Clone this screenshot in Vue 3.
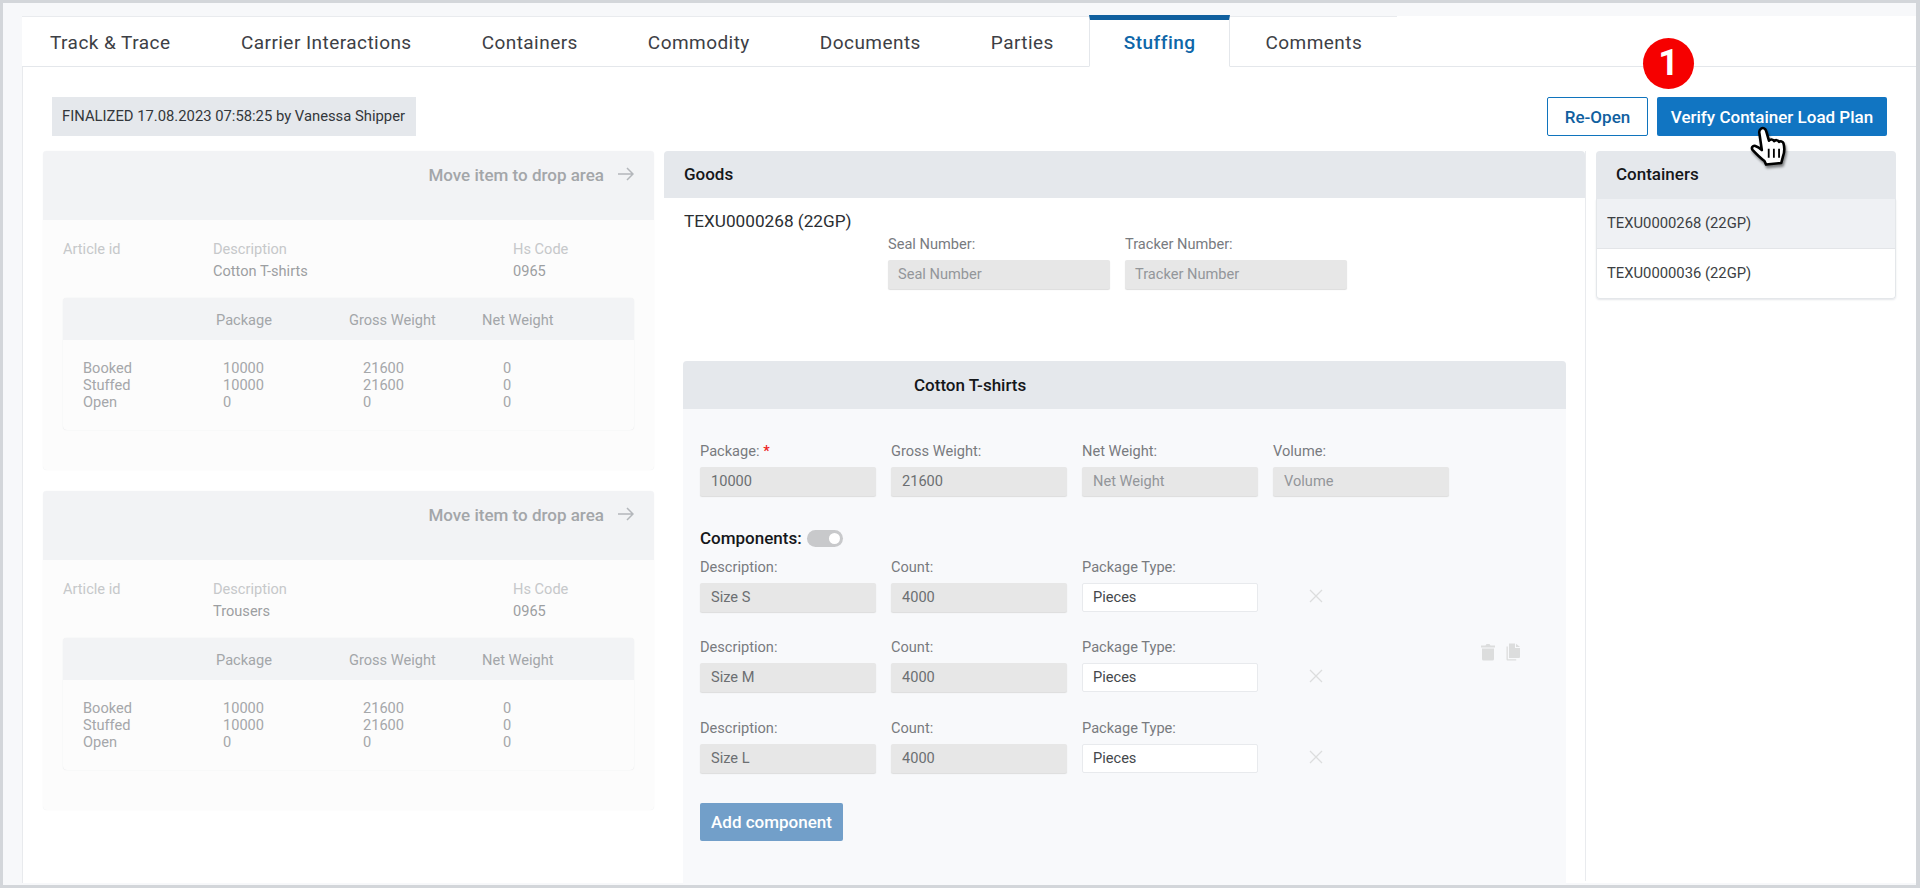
<script setup>
const tabs = ['Track & Trace', 'Carrier Interactions', 'Containers', 'Commodity', 'Documents', 'Parties', 'Stuffing', 'Comments']
const items = [{ name: 'Cotton T-shirts' }, { name: 'Trousers' }]
const rows = [
  ['Booked', '10000', '21600', '0'],
  ['Stuffed', '10000', '21600', '0'],
  ['Open', '0', '0', '0']
]
const sizes = ['Size S', 'Size M', 'Size L']
</script>

<template>
  <div class="frame">
    <div class="tabs">
      <div v-for="t in tabs" :key="t" class="tab" :class="{ active: t === 'Stuffing' }">{{ t }}</div>
      <div class="tabs-rest"></div>
    </div>
    <div class="content">
      <div class="toolbar">
        <div class="status">FINALIZED 17.08.2023 07:58:25 by Vanessa Shipper</div>
        <div class="actions">
          <button class="btn ghost">Re-Open</button>
          <button class="btn primary">Verify Container Load Plan</button>
        </div>
      </div>
      <div class="columns">
        <div class="left">
          <div v-for="item in items" :key="item.name" class="item">
            <div class="item-head">
              <span>Move item to drop area</span>
              <svg width="16" height="14" viewBox="0 0 16 14" fill="none" stroke="#b4b7bb" stroke-width="1.5"><path d="M0 7h15M9 1l6 6-6 6" /></svg>
            </div>
            <div class="item-body">
              <div class="meta">
                <div class="m-label">Article id</div>
                <div class="m-label">Description<div class="m-val">{{ item.name }}</div></div>
                <div class="m-label">Hs Code<div class="m-val">0965</div></div>
              </div>
              <div class="summary">
                <div class="sum-head">
                  <span>Package</span><span>Gross Weight</span><span>Net Weight</span>
                </div>
                <div class="sum-body">
                  <div v-for="r in rows" :key="r[0]" class="sum-row">
                    <span v-for="(c, i) in r" :key="i">{{ c }}</span>
                  </div>
                </div>
              </div>
            </div>
          </div>
        </div>

        <div class="goods">
          <div class="goods-head">Goods</div>
          <div class="goods-title">TEXU0000268 (22GP)</div>
          <div class="seal-row">
            <div class="field wide">
              <label>Seal Number:</label>
              <div class="input ph">Seal Number</div>
            </div>
            <div class="field wide">
              <label>Tracker Number:</label>
              <div class="input ph">Tracker Number</div>
            </div>
          </div>
          <div class="card">
            <div class="card-head">Cotton T-shirts</div>
            <div class="card-body">
              <div class="form">
                <div class="grid4">
                  <div class="field"><label>Package: <b class="req">*</b></label><div class="input">10000</div></div>
                  <div class="field"><label>Gross Weight:</label><div class="input">21600</div></div>
                  <div class="field"><label>Net Weight:</label><div class="input ph">Net Weight</div></div>
                  <div class="field"><label>Volume:</label><div class="input ph">Volume</div></div>
                </div>
                <div class="comp-title">
                  <span>Components:</span>
                  <span class="toggle"><i></i></span>
                </div>
                <div v-for="s in sizes" :key="s" class="grid4 comp">
                  <div class="field"><label>Description:</label><div class="input">{{ s }}</div></div>
                  <div class="field"><label>Count:</label><div class="input">4000</div></div>
                  <div class="field"><label>Package Type:</label><div class="input white">Pieces</div></div>
                  <div class="x">
                    <svg width="14" height="14" viewBox="0 0 14 14" stroke="#dcdddd" stroke-width="1.3" fill="none"><path d="M1 1l12 12M13 1L1 13" /></svg>
                  </div>
                </div>
                <button class="btn add">Add component</button>
              </div>
              <div class="tools">
                <svg width="14" height="18" viewBox="0 0 14 18" fill="#dcdddd"><path d="M0 2.5h4.5L5.5 1h3l1 1.5H14V4.500H0zM1 5.500h12V16a1.600 1.600 0 0 1-1.600 1.600H2.600A1.600 1.600 0 0 1 1 16z" /></svg>
                <svg width="15" height="18" viewBox="0 0 15 18" fill="#dcdddd"><path d="M3 0.500h6v4.600h5V14a1 1 0 0 1-1 1H3zM10 .7l4 3.400h-4zM1.800 3.500v12.800h8.400v1.200H1.600A1.100 1.100 0 0 1 .5 16.400V3.500z" /></svg>
              </div>
            </div>
          </div>
        </div>

        <div class="containers">
          <div class="cont-head">Containers</div>
          <div class="cont-list">
            <div class="cont-row sel">TEXU0000268 (22GP)</div>
            <div class="cont-row">TEXU0000036 (22GP)</div>
          </div>
        </div>
      </div>
    </div>

    <div class="step">1</div>
    <svg class="hand" width="44" height="47" viewBox="0 0 34 36">
      <path d="M10 3.500c1.600-1.200 3.500-.2 4 1.600l2.200 7.600c1-1.300 3.200-1.200 4 .4.900-1.200 3-1 3.800.6 1-.9 2.900-.5 3.400 1 .9 3.200.8 7.300-.5 10.700l-1.200 4.600-11.700 1.200-1.300-2.800C9.500 26 6 22.500 3.500 19.800c-1.200-1.500.3-3.700 2.200-3 1.800.7 3.700 2 5 3.200L8.800 7c-.3-1.300.2-2.700 1.200-3.500z" fill="#fff" stroke="#000" stroke-width="2" stroke-linejoin="round" class="hand-shape" />
      <path d="M16 19v7M20 19v7M24 19v7" stroke="#000" stroke-width="1.400" />
    </svg>
  </div>
</template>

<style>
html, body { margin: 0; background: #fff; }
</style>

<style scoped>
.frame {
  position: relative;
  width: 1920px;
  height: 888px;
  box-sizing: border-box;
  overflow: hidden;
  border: 3px solid #d3d6da;
  border-right-width: 4px;
  padding: 13px 0 0 19px;
  background: #f7f8fa;
  font-family: Roboto, "Liberation Sans", sans-serif;
  color: #3d4045;
}
.tabs { display: flex; height: 51px; box-sizing: border-box; background: #fff; border-bottom: 1px solid #e4e7eb; }
.tab {
  padding: 0 35px;
  font-size: 19px;
  letter-spacing: .45px;
  line-height: 51px;
  white-space: nowrap;
  border-top: 1px solid #e9ebee;
}
.tab:first-child { padding: 0 35.5px 0 28px; }
.tab.active {
  color: #0e66a8;
  font-weight: 500;
  margin-top: -1px;
  border-top: 5px solid #10609f;
  border-left: 1px solid #e4e7eb;
  border-right: 1px solid #e4e7eb;
  border-bottom: 1px solid #fff;
  height: 52px;
  line-height: 46px;
  box-sizing: border-box;
  padding: 0 34px;
}
.tabs-rest { flex: 1; margin-top: 1px; }
.content { height: 816px; background: #fff; border-left: 1px solid #e8eaed; padding: 0 0 0 20px; box-sizing: border-box; }
.toolbar { display: flex; justify-content: space-between; padding: 30px 29px 0 9px; height: 84px; box-sizing: border-box; }
.status { height: 39px; line-height: 39px; background: #e5e8ec; padding: 0 10px; font-size: 14.8px; color: #33373b; width: 364px; box-sizing: border-box; white-space: nowrap; }
.actions { display: flex; gap: 9px; }
.btn { font-family: inherit; font-size: 17px; font-weight: 500; height: 39px; border-radius: 2px; box-sizing: border-box; cursor: pointer; padding: 0; }
.ghost { width: 101px; background: #fff; border: 1px solid #1074bd; color: #10609f; }
.primary { width: 230px; background: #1175c2; border: 0; color: #fff; }
.columns { display: flex; align-items: stretch; height: 730px; }
.left { width: 611px; margin-right: 10px; display: flex; flex-direction: column; gap: 21px; }
.item { height: 319px; border-radius: 4px; background: #fcfcfc; box-shadow: 0 0 1px #e6e8ea; }
.item-head { height: 69px; background: #f2f3f5; border-radius: 4px 4px 0 0; display: flex; justify-content: flex-end; gap: 14px; padding: 15px 20px 0 0; box-sizing: border-box; color: #a3a6a9; font-size: 17px; font-weight: 500; line-height: 18px; }
.item-head svg { margin-top: 1px; }
.item-body { padding: 21px 20px 0; }
.meta { display: grid; grid-template-columns: 150px 300px 1fr; height: 57px; font-size: 14.6px; }
.m-label { color: #c6c8ca; line-height: 16px; }
.m-val { color: #9c9fa2; margin-top: 6px; }
.summary { height: 132px; border-radius: 4px; box-shadow: 0 0 1px #d8dadc; }
.sum-head { display: grid; grid-template-columns: 153px 133px 133px 1fr; height: 42px; background: #f2f3f5; border-radius: 4px 4px 0 0; line-height: 44px; font-size: 14.6px; color: #a3a6a9; }
.sum-head span:first-child { grid-column: 2; }
.sum-body { padding: 20px 0 0 20px; }
.sum-row { display: grid; grid-template-columns: 140px 140px 140px 1fr; font-size: 14.6px; line-height: 17px; color: #a5a7aa; }
.goods { width: 922px; border-right: 1px solid #e9ebee; margin-right: 10px; box-sizing: border-box; }
.goods-head { height: 47px; line-height: 47px; background: #e5e8ec; padding-left: 20px; font-size: 17px; font-weight: 500; color: #15171a; border-radius: 4px 4px 0 0; }
.goods-title { padding: 13px 0 0 20px; font-size: 17.2px; line-height: 20px; color: #2b2e32; }
.seal-row { display: flex; gap: 15px; padding: 5px 0 0 224px; height: 130px; box-sizing: border-box; }
.field { display: flex; flex-direction: column; }
.field label { font-size: 14.6px; line-height: 16px; color: #787b7f; margin-bottom: 8px; }
.wide { width: 222px; }
.input { height: 29px; line-height: 29px; background: #e7e7e7; border-radius: 2px; box-shadow: 0 1px 1px #dcdcdc; padding: 0 10px; font-size: 14.6px; color: #6c6f72; box-sizing: border-box; }
.input.ph { color: #93969a; }
.grid4 .input { padding-left: 11px; }
.grid4 .input.white { background: #fff; color: #44474b; border: 1px solid #e8eaed; padding-left: 10px; line-height: 27px; box-shadow: none; }
.req { color: #e22; font-weight: 500; }
.card { margin: 0 0 0 19px; width: 883px; border-radius: 4px 4px 0 0; background: #f8f9fb; height: 524px; }
.card-head { height: 48px; line-height: 48px; background: #e5e8ec; padding-left: 231px; font-size: 17px; font-weight: 500; color: #15171a; border-radius: 4px 4px 0 0; }
.card-body { display: flex; padding: 34px 0 0 17px; }
.form { width: 770px; }
.grid4 { display: grid; grid-template-columns: repeat(4, 176px); column-gap: 15px; }
.comp-title { display: flex; align-items: center; gap: 5px; margin-top: 33px; height: 18px; font-size: 17px; font-weight: 500; color: #15171a; }
.toggle { display: block; width: 36px; height: 17px; border-radius: 9px; background: #c8c9cb; position: relative; }
.toggle i { position: absolute; right: 3px; top: 3px; width: 11px; height: 11px; border-radius: 50%; background: #fff; }
.comp { margin-top: 27px; }
.comp-title + .comp { margin-top: 12px; }
.comp-title + .comp + .comp + .comp { margin-top: 28px; }
.x { padding: 29px 0 0 36px; }
.add { display: block; margin-top: 30px; width: 143px; height: 38px; background: #729fc9; border: 0; color: #fff; }
.tools { display: flex; gap: 11px; padding-top: 200px; margin-left: 11px; height: 18px; }
.containers { width: 300px; }
.cont-head { height: 48px; line-height: 47px; background: #e5e8ec; padding-left: 20px; font-size: 17px; font-weight: 500; color: #15171a; border-radius: 4px 4px 0 0; }
.cont-list { border: 1px solid #e4e7ea; border-top: 0; border-radius: 0 0 4px 4px; box-shadow: 0 1px 2px #e4e6e9; }
.cont-row { height: 49px; line-height: 49px; padding-left: 10px; font-size: 14.8px; color: #3c3f43; }
.cont-row.sel { background: #eff1f4; border-bottom: 1px solid #e3e5e8; }
.step {
  position: absolute;
  left: 1640px;
  top: 35px;
  width: 51px;
  height: 51px;
  border-radius: 50%;
  background: #f60000;
  color: #fff;
  font-size: 36px;
  font-weight: 700;
  line-height: 51px;
  text-align: center;
}
.hand { position: absolute; left: 1745px; top: 121px; }
.hand-shape { filter: drop-shadow(1px 2px 1px rgba(0,0,0,.45)); }
</style>
